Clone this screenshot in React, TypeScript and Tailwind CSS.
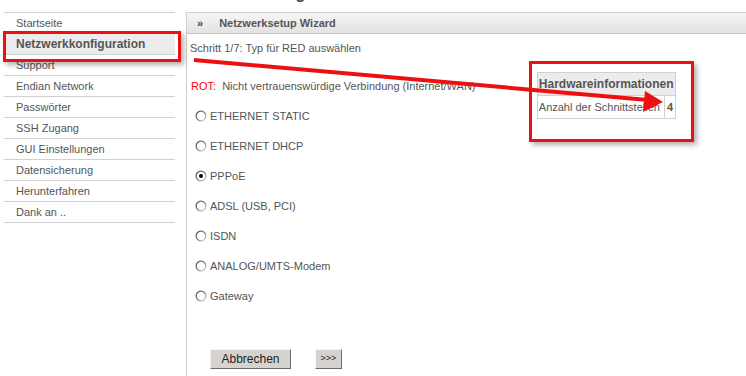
import React from 'react';

const menu = [
  'Startseite',
  'Netzwerkkonfiguration',
  'Support',
  'Endian Network',
  'Passwörter',
  'SSH Zugang',
  'GUI Einstellungen',
  'Datensicherung',
  'Herunterfahren',
  'Dank an ..',
];

const options = [
  'ETHERNET STATIC',
  'ETHERNET DHCP',
  'PPPoE',
  'ADSL (USB, PCI)',
  'ISDN',
  'ANALOG/UMTS-Modem',
  'Gateway',
];

function Radio({ checked }: { checked?: boolean }) {
  return (
    <svg width="12" height="12" viewBox="0 0 12 12" className="shrink-0">
      <defs>
        <linearGradient id="rg" x1="0" y1="0" x2="1" y2="1">
          <stop offset="0" stopColor="#404040" />
          <stop offset="0.55" stopColor="#8a8a8a" />
          <stop offset="1" stopColor="#f2f2f2" />
        </linearGradient>
      </defs>
      <circle cx="6" cy="6" r="5.5" fill="url(#rg)" />
      <circle cx="6" cy="6" r="4.2" fill="#ffffff" />
      {checked && <circle cx="6" cy="6" r="2" fill="#000000" />}
    </svg>
  );
}

export default function App() {
  return (
    <div className="relative w-[746px] h-[376px] overflow-hidden bg-white font-['Liberation_Sans',Arial,sans-serif] text-[11px] text-[#555]">
      <div className="flex pl-[4px] pt-[12px] h-full">
        {/* Sidebar */}
        <ul className="w-[171px] shrink-0 border-t border-[#d0d0d0]">
          {menu.map(item => {
            const active = item === 'Netzwerkkonfiguration';
            return (
              <li
                key={item}
                className={`h-[21px] flex items-center pl-[12px] border-b border-[#d0d0d0] ${active ? 'bg-[#ececec] font-bold text-[12px] text-[#555]' : ''}`}
              >
                {item}
              </li>
            );
          })}
        </ul>

        {/* Main panel */}
        <div className="relative ml-[11px] flex-1 flex flex-col border-l border-t border-[#cfcfcf]">
          <div className="absolute left-[0px] top-[-13px] h-[12px] w-[300px] overflow-hidden pointer-events-none">
            <div className="mt-[-14px] leading-[16px] text-[16px] font-bold text-[#444]">Netzwerkkonfiguration</div>
          </div>
          <div className="h-[21px] flex items-center bg-gradient-to-b from-[#f6f6f6] to-[#e2e2e2] border-b border-[#c4c4c4]">
            <span className="ml-[10px] font-bold text-[#444]">»</span>
            <span className="ml-[16px] font-bold text-[#555]">Netzwerksetup Wizard</span>
          </div>

          <div className="pl-[3px] pt-[8px] leading-[13px]">Schritt 1/7: Typ für RED auswählen</div>

          <div className="flex justify-between pr-[70px]">
            <div className="flex flex-col">
              <div className="mt-[25px] pl-[4px] leading-[13px]">
                <span className="text-[#ff0000]">ROT:</span>&nbsp; Nicht vertrauenswürdige Verbindung (Internet/WAN)
              </div>
              <div className="mt-[8px] flex flex-col">
                {options.map(o => (
                  <label key={o} className="h-[30px] flex items-center gap-[3px] pl-[8px]">
                    <Radio checked={o === 'PPPoE'} />
                    <span>{o}</span>
                  </label>
                ))}
              </div>
              <div className="mt-[38px] ml-[23px] flex gap-[24px]">
                <button className="w-[81px] h-[20px] bg-[#d6d3ce] border border-[#f4f3f0] border-r-[#6e6c68] border-b-[#6e6c68] text-[12px] text-[#222]">
                  Abbrechen
                </button>
                <button className="w-[27px] h-[20px] bg-[#d6d3ce] border border-[#f4f3f0] border-r-[#6e6c68] border-b-[#6e6c68] text-[9px] text-[#222]">
                  &gt;&gt;&gt;
                </button>
              </div>
            </div>

            <table className="mt-[17px] self-start border-collapse border border-[#d0d0d0]">
              <tbody>
                <tr className="h-[23px] bg-[#ececec]">
                  <th colSpan={2} className="px-[1px] text-left font-bold text-[12px] text-[#555] border border-[#d0d0d0]">
                    Hardwareinformationen
                  </th>
                </tr>
                <tr className="h-[23px]">
                  <td className="pl-[1px] pr-[4px] border border-[#d0d0d0]">Anzahl der Schnittstellen</td>
                  <td className="px-[2px] font-bold border border-[#d0d0d0]">4</td>
                </tr>
              </tbody>
            </table>
          </div>
        </div>
      </div>

      {/* Annotation overlays */}
      <div className="absolute left-[3px] top-[31px] w-[178px] h-[31px] border-[3px] border-[#ee1010] shadow-[3px_3px_5px_rgba(0,0,0,0.3)] pointer-events-none" />
      <div className="absolute left-[529px] top-[61px] w-[165px] h-[81px] border-[3px] border-[#ee1010] shadow-[3px_3px_5px_rgba(0,0,0,0.3)] pointer-events-none" />
      <svg className="absolute left-0 top-0 pointer-events-none" width="746" height="376">
        <line x1="194" y1="60" x2="648" y2="100" stroke="#ee1010" strokeWidth="4" />
        <polygon points="663,102 645,91 643,112" fill="#ee1010" />
      </svg>
    </div>
  );
}
